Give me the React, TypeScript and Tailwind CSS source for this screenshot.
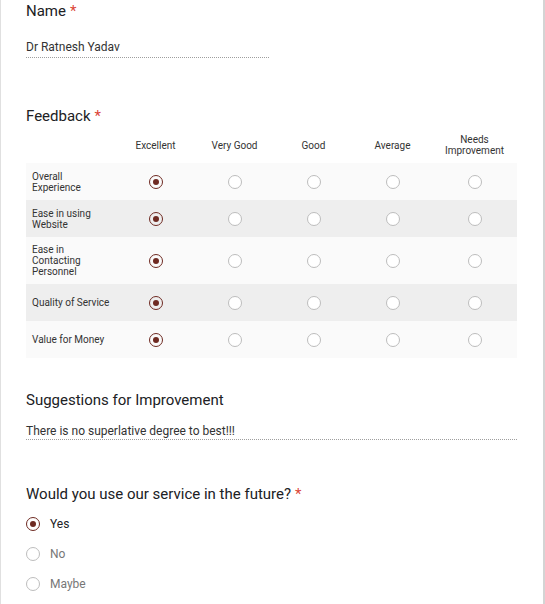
import React from 'react'

const COLUMNS = ['Excellent', 'Very Good', 'Good', 'Average', 'Needs Improvement']

const ROWS = [
  { label: 'Overall Experience', lines: ['Overall', 'Experience'], bg: 'bg-[#fafafa]' },
  { label: 'Ease in using Website', lines: ['Ease in using', 'Website'], bg: 'bg-[#eeeeee]' },
  { label: 'Ease in Contacting Personnel', lines: ['Ease in', 'Contacting', 'Personnel'], bg: 'bg-[#fafafa]' },
  { label: 'Quality of Service', lines: ['Quality of Service'], bg: 'bg-[#eeeeee]' },
  { label: 'Value for Money', lines: ['Value for Money'], bg: 'bg-[#fafafa]' },
]

function Radio({ checked }: { checked?: boolean }) {
  return checked ? (
    <span className="flex h-[14px] w-[14px] items-center justify-center rounded-full border-[1.5px] border-[#6e2a22]">
      <span className="h-[6px] w-[6px] rounded-full bg-[#6e2a22]" />
    </span>
  ) : (
    <span className="block h-[14px] w-[14px] rounded-full border border-[#bdbdbd] bg-white" />
  )
}

function Title({ children, required }: { children: React.ReactNode; required?: boolean }) {
  return (
    <h2 className="text-[15px] leading-5 text-[#202124]">
      {children}
      {required && <span className="ml-1 text-[#db4437]">*</span>}
    </h2>
  )
}

export default function App() {
  return (
    <div
      className="min-h-[604px] w-[545px] border-l border-r-2 border-l-[#e0e0e0] border-r-[#d4d4d4] bg-white pl-[25px] pr-[26px]"
      style={{ fontFamily: 'Roboto, "Liberation Sans", sans-serif' }}
    >
      <div className="pt-[1px]">
        <Title required>Name</Title>
        <div className="mt-[18px] w-[243px] border-b border-dotted border-[#9e9e9e] pb-[2px] text-[12px] leading-4 text-[#333]">
          Dr Ratnesh Yadav
        </div>
      </div>

      <div className="mt-[48px]">
        <Title required>Feedback</Title>
        <div className="grid grid-cols-[90px_79px_79px_79px_79px_85px] text-[10px] leading-[11px] text-[#333]">
          <div className="h-[37px]" />
          {COLUMNS.map(c => (
            <div key={c} className="flex h-[37px] items-center justify-center px-2 pt-[1px] text-center">
              {c}
            </div>
          ))}
          {ROWS.map(row => (
            <React.Fragment key={row.label}>
              <div className={`flex min-h-[37px] flex-col justify-center py-[7px] pl-[6px] ${row.bg}`}>
                {row.lines.map(l => (
                  <span key={l}>{l}</span>
                ))}
              </div>
              {COLUMNS.map((c, i) => (
                <div key={c} className={`flex items-center justify-center ${row.bg}`}>
                  <Radio checked={i === 0} />
                </div>
              ))}
            </React.Fragment>
          ))}
        </div>
      </div>

      <div className="mt-[32px]">
        <Title>Suggestions for Improvement</Title>
        <div className="mt-[13px] border-b border-dotted border-[#9e9e9e] text-[12px] leading-4 text-[#333]">
          There is no superlative degree to best!!!
        </div>
      </div>

      <div className="mt-[44px]">
        <Title required>Would you use our service in the future?</Title>
        <div className="mt-[12px] flex flex-col gap-[14px] text-[12px] leading-4">
          {[
            { label: 'Yes', checked: true },
            { label: 'No', checked: false },
            { label: 'Maybe', checked: false },
          ].map(o => (
            <label key={o.label} className="flex items-center gap-[10px]">
              <Radio checked={o.checked} />
              <span className={o.checked ? 'text-[#202124]' : 'text-[#777]'}>{o.label}</span>
            </label>
          ))}
        </div>
      </div>
    </div>
  )
}
